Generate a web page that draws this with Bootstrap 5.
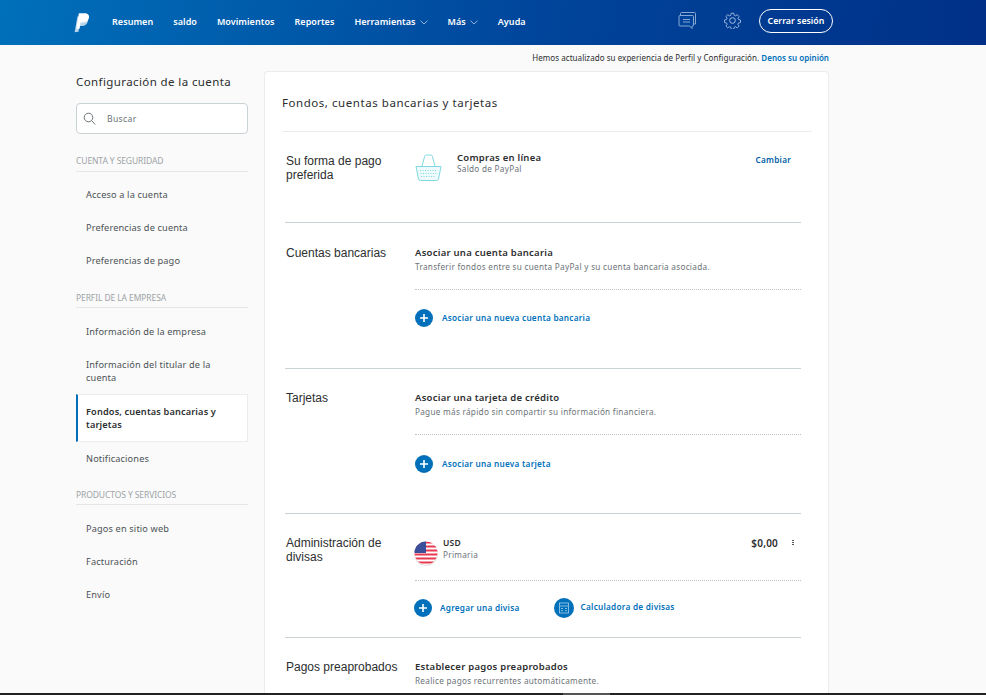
<!DOCTYPE html>
<html lang="es">
<head>
<meta charset="utf-8">
<title>Fondos, cuentas bancarias y tarjetas</title>
<link href="https://cdn.jsdelivr.net/npm/bootstrap@5.3.0/dist/css/bootstrap.min.css" rel="stylesheet">
<style>
html,body{height:100%;overflow:hidden}
body{background:#fafafa;font-family:"Noto Sans","Open Sans",sans-serif;font-size:9px;color:#2c2e2f;letter-spacing:.35px}
.page{height:695px}
.pp-nav{height:45px;background:linear-gradient(100deg,#0070ba 0%,#00459b 55%,#003087 100%);padding:0 0 0 73px;flex:none}
.pp-logo{width:19px;margin-right:20px}
.pp-nav a.nl{color:#fff;font-weight:600;font-size:9px;text-decoration:none;margin-right:20px;margin-top:-2px;letter-spacing:.05px;white-space:nowrap}
.pp-nav svg.car{margin-left:4px}
.nav-r{margin-left:auto;margin-right:153px;margin-top:-1px}
.ic-chat{margin-right:28px;margin-top:-3px}
.ic-gear{margin-right:18px;margin-top:-3px}
.logout{border:1.5px solid #fff;border-radius:12px;height:24px;width:74px;color:#fff;font-size:8.8px;font-weight:600;line-height:1;background:transparent;padding:0;letter-spacing:0;margin-top:-2px}
.notice{height:26px;padding-right:157px;font-size:8px;letter-spacing:.05px;line-height:26px;text-align:right;flex:none}
.notice a{color:#0070ba;font-weight:600;text-decoration:none;letter-spacing:.02px}
.body-row{flex:1;min-height:0;overflow:hidden;padding-left:76px;gap:16px}
.side{width:172px;flex:none}
.side h2{font-size:11.5px;font-weight:400;letter-spacing:.4px;margin:2px 0 0;line-height:17px;height:30px}
.srch{height:31px;border:1px solid #cbd2d6;border-radius:4px;background:#fff;padding-left:6px;color:#6c7378;font-size:8.6px;margin-bottom:21px}
.srch span{margin-left:11px;padding-top:2px}
.side h3{font-size:8.5px;font-weight:400;color:#9da3a6;border-bottom:1px solid #e4e6e7;margin:0;height:17px;line-height:11px;letter-spacing:-.1px;text-transform:uppercase}
.side h3.g{margin-top:15px;height:16px}
.side h3.g+ul{margin-top:7px}
.side h3.g2{margin-top:14px}
.side ul{margin:6px 0 0;padding:0;list-style:none}
.side li{padding:10px;line-height:13px;color:#4c5256;font-size:9.2px;letter-spacing:.15px}
.side li.on{background:#fff;border:1px solid #eaeced;border-left:2px solid #0070ba;color:#2c2e2f;font-weight:600;padding:10px 8px}
.panel{width:565px;flex:none;background:#fff;border:1px solid #eaeced;border-bottom:0;border-radius:4px 4px 0 0;padding:0 17px;height:640px}
.panel>h1{font-size:11.5px;font-weight:400;letter-spacing:.55px;margin:0;height:60px;padding-top:22px;line-height:17px;border-bottom:1px solid #eaeced;width:530px}
.sec{margin:0 10px 0 3px;border-bottom:1px solid #cbd2d6;display:flex}
.lab{width:130px;flex:none;padding-left:1px;font-family:"Liberation Sans",Arial,sans-serif;font-size:12px;line-height:14px;color:#2c2e2f;letter-spacing:0}
.main{flex:1;min-width:0}
.t1{font-size:9.5px;font-weight:600;line-height:13px;letter-spacing:.25px}
.t2{font-size:8.2px;line-height:11px;color:#6c7378;letter-spacing:.28px;margin-top:2px}
.t2.tight{margin-top:0}
.dots{border-bottom:1px dotted #bcc4c9}
.lnk{color:#0070ba;font-size:8.2px;font-weight:600;text-decoration:none;letter-spacing:.26px;white-space:nowrap}
.cir{width:18px;height:18px;flex:none}
.s1{height:91px;padding-top:22px}
.s2{height:146px;padding-top:23px}
.s3{height:145px;padding-top:22px}
.s4{height:124px;padding-top:22px}
.strip{height:2px;background:linear-gradient(90deg,#222 0 563px,#555 563px 610px,#222 610px);flex:none}
</style>
</head>
<body>
<div class="page d-flex flex-column">
  <nav class="pp-nav d-flex align-items-center">
    <svg class="pp-logo" viewBox="0 0 20 24" height="21"><path fill="#fff" opacity=".72" d="M1 23 4.200 5h7c3.600 0 5.600 2 5 5.300-.7 3.800-3.400 5.700-7 5.700H6.400l-1 6.500z"/><path fill="#fff" d="M3 19 5.800 1.500h6.400c3.800 0 5.800 1.800 5.200 5-.7 3.800-3.500 5.500-7.400 5.500H7.700l-1 7z"/></svg>
    <a class="nl" href="#">Resumen</a>
    <a class="nl" href="#">saldo</a>
    <a class="nl" href="#">Movimientos</a>
    <a class="nl" href="#">Reportes</a>
    <a class="nl" href="#">Herramientas<svg class="car" width="8" height="5" viewBox="0 0 8 5"><path d="M.5.7 4 4 7.500.7" fill="none" stroke="#b9cde6" stroke-width=".8"/></svg></a>
    <a class="nl" href="#">Más<svg class="car" width="8" height="5" viewBox="0 0 8 5"><path d="M.5.7 4 4 7.500.7" fill="none" stroke="#b9cde6" stroke-width=".8"/></svg></a>
    <a class="nl" href="#">Ayuda</a>
    <div class="nav-r d-flex align-items-center">
      <svg class="ic-chat" width="18" height="17" viewBox="0 0 18 17" fill="none" stroke="#86a8d2" stroke-width="1"><path d="M2.500 3V1.500A1 1 0 0 1 3.500.5h13a1 1 0 0 1 1 1V12h-2"/><path d="M2 3.500h12.500a1 1 0 0 1 1 1V13a1 1 0 0 1-1 1H14v2.500L11.500 14H2a1 1 0 0 1-1-1V4.500a1 1 0 0 1 1-1z" fill="#00459b"/><path d="M5 7.500h7M5 10h7"/></svg>
      <svg class="ic-gear" width="17" height="17" viewBox="0 0 24 24" fill="none" stroke="#b3c9e6" stroke-width="1.300"><circle cx="12" cy="12" r="4"/><path d="M10 1.500h4l.7 3.200 2 .9 2.800-1.800 2.800 2.800-1.800 2.800.9 2 3.100.7v4l-3.100.7-.9 2 1.800 2.800-2.800 2.800-2.800-1.800-2 .9-.7 3.200h-4l-.7-3.200-2-.9-2.800 1.800-2.800-2.800 1.800-2.800-.9-2-3.100-.7v-4l3.100-.7.9-2-1.800-2.800 2.800-2.800 2.800 1.800 2-.9z" transform="translate(1.200 .4) scale(.9)"/></svg>
      <button class="logout btn" type="button">Cerrar sesión</button>
    </div>
  </nav>
  <div class="notice">Hemos actualizado su experiencia de Perfil y Configuración. <a href="#">Denos su opinión</a></div>
  <div class="body-row d-flex">
    <aside class="side">
      <h2>Configuración de la cuenta</h2>
      <div class="srch d-flex align-items-center">
        <svg width="13" height="13" viewBox="0 0 13 13" fill="none" stroke="#5b6469" stroke-width=".9"><circle cx="5.500" cy="5.500" r="4.300"/><path d="m8.800 8.800 3.400 3.700"/></svg>
        <span>Buscar</span>
      </div>
      <h3>Cuenta y seguridad</h3>
      <ul>
        <li>Acceso a la cuenta</li>
        <li>Preferencias de cuenta</li>
        <li>Preferencias de pago</li>
      </ul>
      <h3 class="g">Perfil de la empresa</h3>
      <ul>
        <li>Información de la empresa</li>
        <li>Información del titular de la cuenta</li>
        <li class="on">Fondos, cuentas bancarias y tarjetas</li>
        <li>Notificaciones</li>
      </ul>
      <h3 class="g g2">Productos y servicios</h3>
      <ul>
        <li>Pagos en sitio web</li>
        <li>Facturación</li>
        <li>Envío</li>
      </ul>
    </aside>
    <main class="panel">
      <h1>Fondos, cuentas bancarias y tarjetas</h1>
      <section class="sec s1">
        <div class="lab">Su forma de pago<br>preferida</div>
        <div class="main d-flex">
          <svg width="27" height="28" viewBox="0 0 27 28" fill="none" stroke="#7fd8de" stroke-width="1" class="flex-none"><path d="M7 12 9.700 2.200Q10 1 11.500 1h4Q17 1 17.300 2.200L20 12"/><path d="M1 12.500h25L23.500 25a2 2 0 0 1-2 1.500h-16a2 2 0 0 1-2-1.500z" fill="#eefafb"/><path d="M5 16.500h17M5.500 19.500h16M6 22.500h15" stroke-dasharray="1 1.500"/></svg>
          <div style="margin-left:15px;margin-top:-1px">
            <div class="t1" style="line-height:10.500px">Compras en línea</div>
            <div class="t2 tight" style="line-height:10px">Saldo de PayPal</div>
          </div>
          <a class="lnk ms-auto" style="color:#005ea6;margin-right:10px" href="#">Cambiar</a>
        </div>
      </section>
      <section class="sec s2">
        <div class="lab">Cuentas bancarias</div>
        <div class="main">
          <div class="t1">Asociar una cuenta bancaria</div>
          <div class="t2 dots" style="height:29px">Transferir fondos entre su cuenta PayPal y su cuenta bancaria asociada.</div>
          <div class="d-flex align-items-center" style="margin-top:19px">
            <svg class="cir" viewBox="0 0 18 18"><circle cx="9" cy="9" r="9" fill="#0070ba"/><path d="M9 5v8M5 9h8" stroke="#fff" stroke-width="1.600"/></svg>
            <a class="lnk" style="margin-left:9px" href="#">Asociar una nueva cuenta bancaria</a>
          </div>
        </div>
      </section>
      <section class="sec s3">
        <div class="lab">Tarjetas</div>
        <div class="main">
          <div class="t1">Asociar una tarjeta de crédito</div>
          <div class="t2 dots" style="height:29px">Pague más rápido sin compartir su información financiera.</div>
          <div class="d-flex align-items-center" style="margin-top:20px">
            <svg class="cir" viewBox="0 0 18 18"><circle cx="9" cy="9" r="9" fill="#0070ba"/><path d="M9 5v8M5 9h8" stroke="#fff" stroke-width="1.600"/></svg>
            <a class="lnk" style="margin-left:9px" href="#">Asociar una nueva tarjeta</a>
          </div>
        </div>
      </section>
      <section class="sec s4">
        <div class="lab">Administración de<br>divisas</div>
        <div class="main">
          <div class="d-flex dots" style="height:47px;margin-top:-2px">
            <svg width="24" height="26" viewBox="0 0 24 26" style="margin-top:7px;margin-left:-1px">
              <defs><clipPath id="c"><circle cx="12" cy="12" r="11.500"/></clipPath></defs>
              <circle cx="12" cy="13" r="12" fill="#ccc" opacity=".5"/>
              <g clip-path="url(#c)"><rect width="24" height="24" fill="#fff"/>
              <path d="M0 1.500h24M0 5.500h24M0 9.500h24M0 13.500h24M0 17.500h24M0 21.500h24" stroke="#e8384f" stroke-width="2"/>
              <rect width="12" height="12" fill="#3c4f9a"/></g>
            </svg>
            <div style="margin-left:5px;margin-top:2px">
              <div class="t1" style="font-size:8.5px;line-height:13px">USD</div>
              <div class="t2 tight" style="line-height:12px">Primaria</div>
            </div>
            <div class="ms-auto t1" style="font-size:10px;margin-right:14px;letter-spacing:.2px;margin-top:3px">$0,00</div>
            <div style="margin-top:6px;margin-right:7px;width:2px;height:5px;background:repeating-linear-gradient(#555 0 1px,transparent 1px 2px)"></div>
          </div>
          <div class="d-flex align-items-center" style="margin-top:17px">
            <svg class="cir" style="margin-left:-1px" viewBox="0 0 18 18"><circle cx="9" cy="9" r="9" fill="#0070ba"/><path d="M9 5v8M5 9h8" stroke="#fff" stroke-width="1.600"/></svg>
            <a class="lnk" style="margin-left:8px" href="#">Agregar una divisa</a>
            <svg class="cir" style="margin-left:34px;width:20px;height:20px" viewBox="0 0 20 20"><circle cx="10" cy="10" r="10" fill="#0070ba"/><rect x="5.500" y="5" width="9" height="10" fill="none" stroke="#8fc6e8" stroke-width=".9"/><path d="M5.500 8h9M7 10.500h2M11 10.500h2M7 12.700h2M11 12.700h2" stroke="#8fc6e8" stroke-width=".9"/></svg>
            <a class="lnk" style="margin-left:7px;margin-top:-1px" href="#">Calculadora de divisas</a>
          </div>
        </div>
      </section>
      <section class="sec border-0" style="padding-top:22px">
        <div class="lab">Pagos preaprobados</div>
        <div class="main">
          <div class="t1">Establecer pagos preaprobados</div>
          <div class="t2">Realice pagos recurrentes automáticamente.</div>
        </div>
      </section>
    </main>
  </div>
  <div class="strip"></div>
</div>
</body>
</html>
